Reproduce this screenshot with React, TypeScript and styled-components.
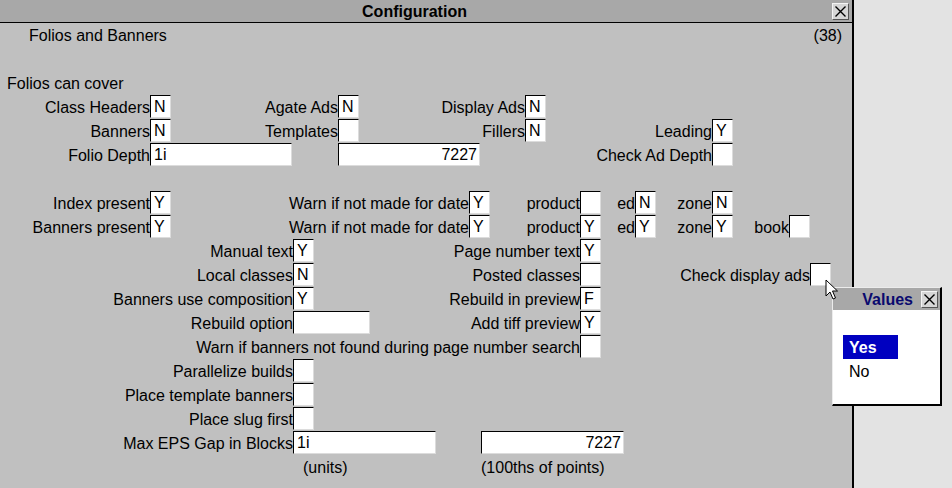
import React from "react";
import styled, { createGlobalStyle } from "styled-components";

const Global = createGlobalStyle`
  html, body { margin: 0; padding: 0; background: #e3e3e3; }
  body { font-family: "Liberation Sans", Arial, sans-serif; font-size: 16px; color: #000; }
  #root { width: 952px; height: 488px; overflow: hidden; position: relative; }
`;

const Desktop = styled.div`
  width: 952px;
  height: 488px;
  position: relative;
  background: #e3e3e3;
`;

const Window = styled.div`
  width: 852px;
  height: 488px;
  background: #c0c0c0;
  border-right: 2px solid #000;
  display: flex;
  flex-direction: column;
`;

const TitleBar = styled.div`
  height: 22px;
  background: #a8a8a8;
  border-bottom: 1px solid #000;
  display: grid;
  grid-template-columns: 1fr 17px;
  column-gap: 3px;
  padding-right: 3px;
  align-items: center;
`;

const Title = styled.div<{ $color?: string; $align?: string }>`
  font-weight: bold;
  font-size: 16px;
  text-align: ${(p) => p.$align || "center"};
  color: ${(p) => p.$color || "#000"};
  line-height: 22px;
  padding-top: 1px;
  white-space: nowrap;
`;

const CloseBtn = styled.div`
  width: 17px;
  height: 17px;
  box-sizing: border-box;
  background: #d6d6d6;
  border: 1px solid;
  border-color: #f4f4f4 #555 #555 #f4f4f4;
  display: flex;
  align-items: center;
  justify-content: center;
`;

const Header = styled.div`
  height: 24px;
  display: flex;
  justify-content: space-between;
  align-items: center;
  padding: 2px 10px 0 29px;
  box-sizing: border-box;
`;

const Spacer = styled.div`
  height: 24px;
`;

const Section = styled.div`
  height: 24px;
  line-height: 24px;
  padding: 1px 0 0 7px;
  box-sizing: border-box;
`;

const Row = styled.div`
  height: 24px;
  display: flex;
  align-items: flex-start;
`;

const Label = styled.div<{ $w: number }>`
  width: ${(p) => p.$w}px;
  flex: none;
  display: flex;
  justify-content: flex-end;
  white-space: nowrap;
  line-height: 23px;
  padding-top: 1px;
  box-sizing: border-box;
`;

const Box = styled.div<{ $w: number; $right?: boolean }>`
  width: ${(p) => p.$w}px;
  height: 23px;
  flex: none;
  box-sizing: border-box;
  background: #fff;
  border: 1px solid;
  border-color: #000 #dcdcdc #dcdcdc #000;
  padding: 1px ${(p) => (p.$right ? "2px" : "0")} 0 ${(p) => (p.$right ? "0" : "3px")};
  text-align: ${(p) => (p.$right ? "right" : "left")};
  line-height: 20px;
  white-space: nowrap;
  overflow: hidden;
`;

const Note = styled.div<{ $w: number }>`
  width: ${(p) => p.$w}px;
  flex: none;
  line-height: 24px;
  padding-top: 1px;
  white-space: nowrap;
`;

const Popup = styled.div`
  position: absolute;
  left: 832px;
  top: 287px;
  width: 110px;
  height: 119px;
  box-sizing: border-box;
  background: #fff;
  border-style: solid;
  border-width: 1px 2px 2px 1px;
  border-color: #ececec #000 #000 #ececec;
  display: flex;
  flex-direction: column;
`;

const PopupTitle = styled.div`
  height: 22px;
  background: #a8a8a8;
  display: grid;
  grid-template-columns: 1fr 17px;
  column-gap: 8px;
  padding-right: 2px;
  align-items: center;
`;

const List = styled.div`
  display: flex;
  flex-direction: column;
  padding: 25px 0 0 10px;
`;

const Item = styled.div<{ $sel?: boolean }>`
  width: 55px;
  height: 24px;
  line-height: 24px;
  box-sizing: border-box;
  padding: 1px 0 0 6px;
  background: ${(p) => (p.$sel ? "#0000c0" : "transparent")};
  color: ${(p) => (p.$sel ? "#fff" : "#000")};
  font-weight: ${(p) => (p.$sel ? "bold" : "normal")};
`;

const Pointer = styled.svg`
  position: absolute;
  left: 825px;
  top: 279px;
`;

const XIcon = () => (
  <svg width="13" height="13" viewBox="0 0 13 13">
    <path d="M1.5 1.5 L11.5 11.5 M11.5 1.5 L1.5 11.5" stroke="#000" strokeWidth="1.4" fill="none" />
  </svg>
);

type F = { at: number; label?: string; w?: number; v?: string; right?: boolean };

const rows: F[][] = [
  [
    { at: 150, label: "Class Headers", v: "N" },
    { at: 338, label: "Agate Ads", v: "N" },
    { at: 525, label: "Display Ads", v: "N" },
  ],
  [
    { at: 150, label: "Banners", v: "N" },
    { at: 338, label: "Templates", v: "" },
    { at: 525, label: "Fillers", v: "N" },
    { at: 712, label: "Leading", v: "Y" },
  ],
  [
    { at: 150, label: "Folio Depth", w: 142, v: "1i" },
    { at: 338, label: "", w: 142, v: "7227", right: true },
    { at: 712, label: "Check Ad Depth", v: "" },
  ],
  [],
  [
    { at: 150, label: "Index present", v: "Y" },
    { at: 469, label: "Warn if not made for date", v: "Y" },
    { at: 580, label: "product", v: "" },
    { at: 635, label: "ed", v: "N" },
    { at: 712, label: "zone", v: "N" },
  ],
  [
    { at: 150, label: "Banners present", v: "Y" },
    { at: 469, label: "Warn if not made for date", v: "Y" },
    { at: 580, label: "product", v: "Y" },
    { at: 635, label: "ed", v: "Y" },
    { at: 712, label: "zone", v: "Y" },
    { at: 789, label: "book", v: "" },
  ],
  [
    { at: 293, label: "Manual text", v: "Y" },
    { at: 580, label: "Page number text", v: "Y" },
  ],
  [
    { at: 293, label: "Local classes", v: "N" },
    { at: 580, label: "Posted classes", v: "" },
    { at: 810, label: "Check display ads", v: "" },
  ],
  [
    { at: 293, label: "Banners use composition", v: "Y" },
    { at: 580, label: "Rebuild in preview", v: "F" },
  ],
  [
    { at: 293, label: "Rebuild option", w: 77, v: "" },
    { at: 580, label: "Add tiff preview", v: "Y" },
  ],
  [{ at: 580, label: "Warn if banners not found during page number search", v: "" }],
  [{ at: 293, label: "Parallelize builds", v: "" }],
  [{ at: 293, label: "Place template banners", v: "" }],
  [{ at: 293, label: "Place slug first", v: "" }],
  [
    { at: 293, label: "Max EPS Gap in Blocks", w: 143, v: "1i" },
    { at: 481, label: "", w: 143, v: "7227", right: true },
  ],
];

const FormRow = ({ items }: { items: F[] }) => {
  let cursor = 0;
  return (
    <Row>
      {items.map((f, i) => {
        const w = f.w ?? 21;
        const slot = f.at - cursor;
        cursor = f.at + w;
        return (
          <React.Fragment key={i}>
            <Label $w={slot}>{f.label}</Label>
            <Box $w={w} $right={f.right}>
              {f.v}
            </Box>
          </React.Fragment>
        );
      })}
    </Row>
  );
};

export default function App() {
  return (
    <Desktop>
      <Global />
      <Window>
        <TitleBar>
          <Title>Configuration</Title>
          <CloseBtn>
            <XIcon />
          </CloseBtn>
        </TitleBar>
        <Header>
          <span>Folios and Banners</span>
          <span>(38)</span>
        </Header>
        <Spacer />
        <Section>Folios can cover</Section>
        {rows.map((r, i) => (
          <FormRow key={i} items={r} />
        ))}
        <Row>
          <Note $w={303} />
          <Note $w={178}>(units)</Note>
          <Note $w={200}>(100ths of points)</Note>
        </Row>
      </Window>
      <Popup>
        <PopupTitle>
          <Title $color="#0a0a6e" $align="right">
            Values
          </Title>
          <CloseBtn>
            <XIcon />
          </CloseBtn>
        </PopupTitle>
        <List>
          <Item $sel>Yes</Item>
          <Item>No</Item>
        </List>
      </Popup>
      <Pointer width="14" height="22" viewBox="0 0 14 22">
        <path
          d="M1 1 L1 17 L5 13 L8 20 L10.5 19 L7.5 12 L12.5 12 Z"
          fill="#fff"
          stroke="#000"
          strokeWidth="1"
          strokeLinejoin="miter"
        />
      </Pointer>
    </Desktop>
  );
}
